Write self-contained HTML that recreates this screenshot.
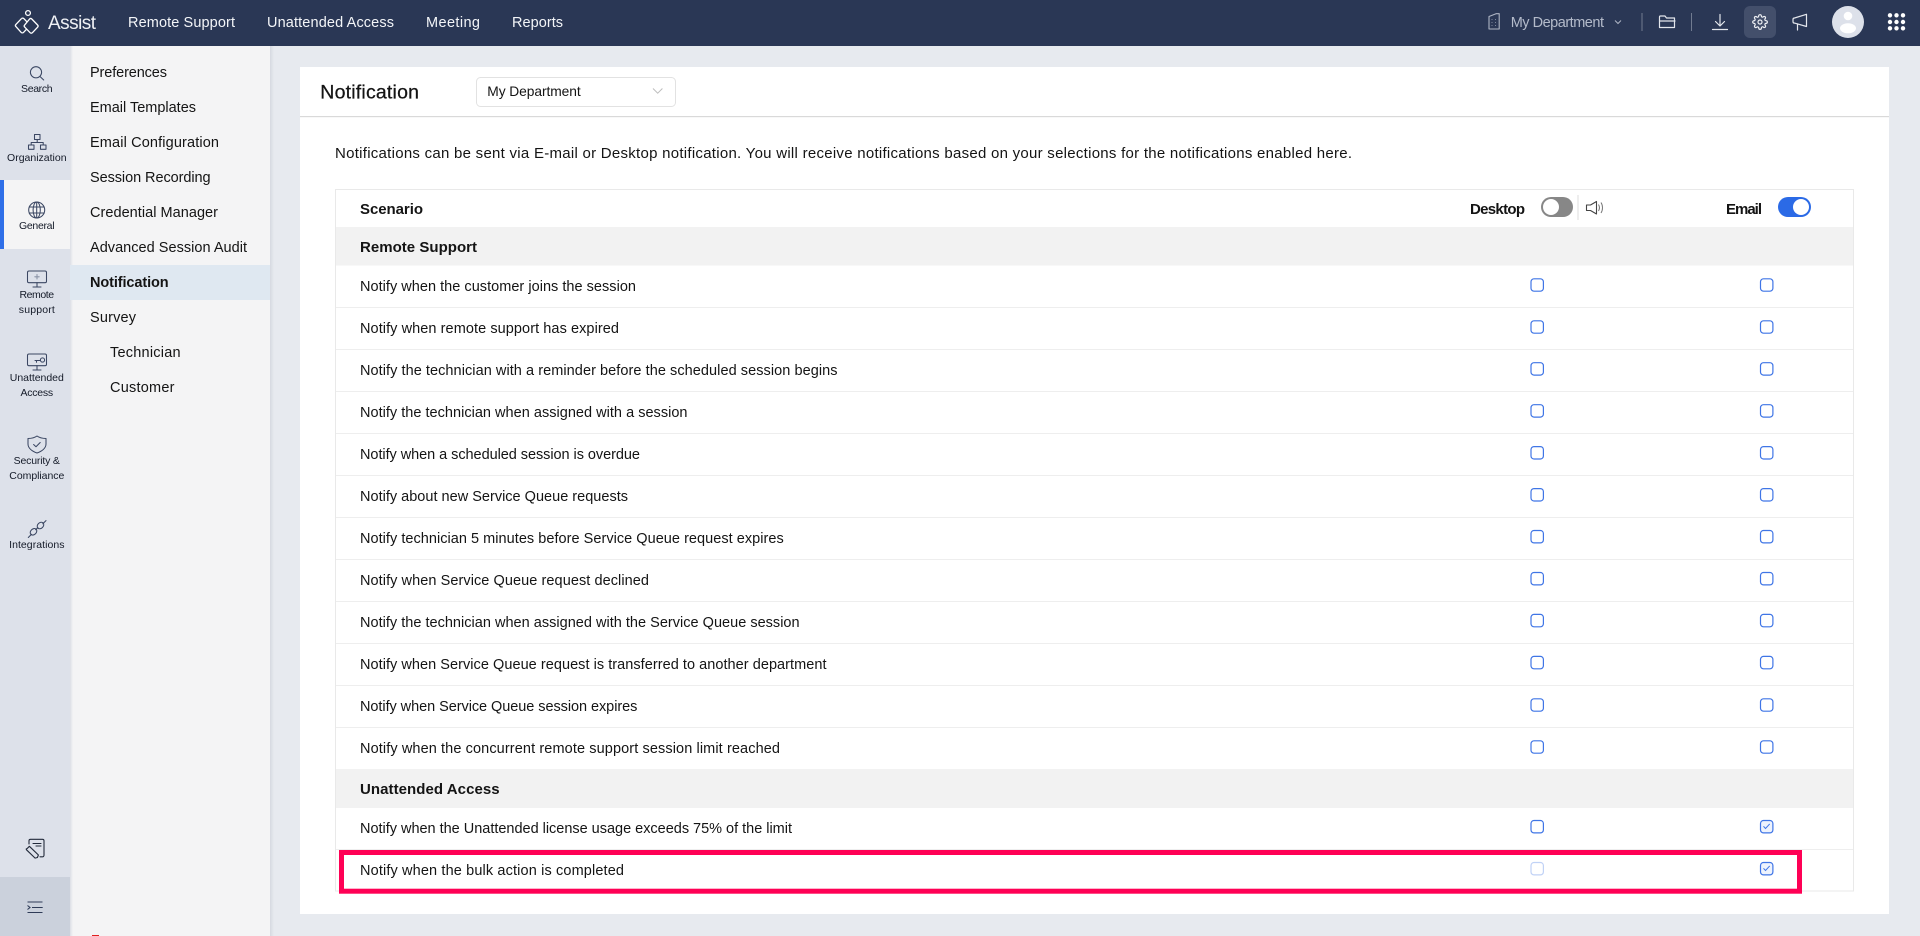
<!DOCTYPE html>
<html lang="en"><head><meta charset="utf-8"><title>Notification</title>
<style>
html,body{margin:0;padding:0;width:1920px;height:936px;overflow:hidden;background:#e7eaef}
svg{display:block;filter:blur(.3px)}
text{font-family:"Liberation Sans",sans-serif;fill:#141414;font-size:14.5px}
.b{font-weight:700;font-size:15px}
.n{fill:#f3f5f8;font-size:14.5px}
.r{font-size:10.5px;text-anchor:middle;fill:#141a28}
.ic{fill:none;stroke:#3b4763;stroke-width:1.05;stroke-linecap:round;stroke-linejoin:round}
.w{fill:none;stroke:#e3e6ec;stroke-width:1.2;stroke-linecap:round;stroke-linejoin:round}
</style></head><body>
<svg width="1920" height="936" viewBox="0 0 1920 936" xmlns="http://www.w3.org/2000/svg">
<defs>
<linearGradient id="sh"><stop offset="0" stop-color="#d6d9e0"/><stop offset="1" stop-color="#e7eaef"/></linearGradient>
<linearGradient id="sh2"><stop offset="0" stop-color="#dcdfe6"/><stop offset="1" stop-color="#f4f4f5"/></linearGradient>
<g id="c"><rect x="-6" y="-6" width="12.4" height="12.4" rx="3" fill="#fff" stroke="#3f75e6" stroke-width="1.2"/></g>
<g id="k"><rect x="-6" y="-6" width="12.4" height="12.4" rx="3" fill="#eef3fd" stroke="#3f75e6" stroke-width="1.2"/><path d="M-3-.2-1 2 3.2-2.6" fill="none" stroke="#3f75e6" stroke-width="1"/></g>
</defs>
<rect width="1920" height="936" fill="#e7eaef"/>
<!-- rail -->
<rect x="0" y="46" width="70" height="890" fill="#dde1ea"/>
<rect x="0" y="877" width="70" height="59" fill="#cbd1dc"/>
<!-- submenu -->
<rect x="70" y="46" width="200" height="890" fill="#f4f4f5"/>
<rect x="270" y="46" width="4" height="890" fill="url(#sh)"/>
<rect x="70" y="46" width="3" height="890" fill="url(#sh2)"/>
<rect x="70" y="265" width="200" height="35" fill="#dfe8f1"/>
<rect x="0" y="180" width="70" height="69" fill="#f4f4f5"/>
<rect x="0" y="180" width="4" height="69" fill="#2f6fe8"/>
<rect x="92" y="935" width="7" height="1" fill="#e02020"/>
<!-- header -->
<rect width="1920" height="46" fill="#2a3755"/>
<g fill="none" stroke="#fff" stroke-width="1.3" stroke-linejoin="round">
<circle cx="28" cy="13" r="2.4"/>
<path d="M21.5 18.6 15.9 24.4a1.6 1.6 0 0 0 0 2.2l5.3 5.8a1.6 1.6 0 0 0 2.3 0l3.2-3.3"/>
<path d="M21.5 18.6a1.6 1.6 0 0 1 2.3 0l3.4 3.5"/>
<path d="M31.8 19 37.6 25a1.6 1.6 0 0 1 0 2.2l-5.2 5.5a1.6 1.6 0 0 1-2.3 0l-5.4-5.6a1.6 1.6 0 0 1 0-2.2L29.6 19a1.6 1.6 0 0 1 2.2 0z"/>
</g>
<text x="48" y="29" textLength="48" style="font-size:19px;fill:#eef0f4">Assist</text>
<text class="n" x="128" y="27" textLength="107">Remote Support</text>
<text class="n" x="267" y="27" textLength="127">Unattended Access</text>
<text class="n" x="426" y="27" textLength="54">Meeting</text>
<text class="n" x="512" y="27" textLength="51">Reports</text>
<!-- header right -->
<g fill="none" stroke="#aeb5c4" stroke-width="1.1" stroke-linejoin="round">
<path d="M1489 16.500l7-2.800h3.200v15.300h-10.200z"/>
<path d="M1492 19v.6M1492 22v.6M1492 25v.6M1495.500 19v.6M1495.500 22v.6M1495.500 25v.6" stroke-width="1"/>
</g>
<text x="1510.700" y="27" textLength="93.300" style="font-size:14.5px;fill:#b4bbca">My Department</text>
<path d="M1615 20.500l3 3 3-3" fill="none" stroke="#aeb5c4" stroke-width="1"/>
<rect x="1641.500" y="13" width="1" height="18" fill="#717b90"/>
<rect x="1691" y="13" width="1" height="18" fill="#717b90"/>
<g class="w">
<path d="M1659.500 27.500V17a1 1 0 0 1 1-1h4.500l1.500 2h8v9.500z"/>
<path d="M1659.500 21h15.500"/>
<path d="M1720 14.500v11M1715.500 21.500l4.500 4.500 4.500-4.500"/><path d="M1712.500 29.500h15"/>
</g>
<rect x="1744" y="6" width="32" height="32" rx="6" fill="#434f6b"/>
<g transform="translate(1752 14) scale(.667)"><path fill="none" stroke="#eef0f4" stroke-width="1.800" stroke-linejoin="round" d="M19.4 15a1.65 1.65 0 0 0 .33 1.82l.06.06a2 2 0 0 1 0 2.83 2 2 0 0 1-2.83 0l-.06-.06a1.65 1.65 0 0 0-1.82-.33 1.65 1.65 0 0 0-1 1.51V21a2 2 0 0 1-2 2 2 2 0 0 1-2-2v-.09A1.65 1.65 0 0 0 9 19.4a1.65 1.65 0 0 0-1.82.33l-.06.06a2 2 0 0 1-2.83 0 2 2 0 0 1 0-2.83l.06-.06a1.65 1.65 0 0 0 .33-1.82 1.65 1.65 0 0 0-1.51-1H3a2 2 0 0 1-2-2 2 2 0 0 1 2-2h.09A1.65 1.65 0 0 0 4.600 9a1.65 1.65 0 0 0-.33-1.82l-.06-.06a2 2 0 0 1 0-2.83 2 2 0 0 1 2.83 0l.06.06a1.65 1.65 0 0 0 1.82.33H9a1.65 1.65 0 0 0 1-1.51V3a2 2 0 0 1 2-2 2 2 0 0 1 2 2v.09a1.65 1.65 0 0 0 1 1.51 1.65 1.65 0 0 0 1.82-.33l.06-.06a2 2 0 0 1 2.83 0 2 2 0 0 1 0 2.83l-.06.06a1.65 1.65 0 0 0-.33 1.82V9a1.65 1.65 0 0 0 1.51 1H21a2 2 0 0 1 2 2 2 2 0 0 1-2 2h-.09a1.65 1.65 0 0 0-1.51 1z"/><circle cx="12" cy="12" r="3" fill="none" stroke="#eef0f4" stroke-width="1.800"/></g>
<g class="w"><path d="M1793 19.500c0-1 .5-1.500 1.500-1.500l12-3.700v12.200l-12-3.400c-1 0-1.500-.6-1.500-1.500z"/><path d="M1797.500 24v6"/></g>
<circle cx="1848" cy="22" r="16" fill="#dde1ea"/>
<circle cx="1848" cy="16" r="4.300" fill="#fff"/>
<ellipse cx="1848" cy="28.300" rx="8" ry="5" fill="#fff"/>
<g fill="#fff"><circle cx="1890" cy="15.300" r="2.200"/><circle cx="1896.500" cy="15.300" r="2.200"/><circle cx="1903" cy="15.300" r="2.200"/><circle cx="1890" cy="22" r="2.200"/><circle cx="1896.500" cy="22" r="2.200"/><circle cx="1903" cy="22" r="2.200"/><circle cx="1890" cy="28.300" r="2.200"/><circle cx="1896.500" cy="28.300" r="2.200"/><circle cx="1903" cy="28.300" r="2.200"/></g>
<!-- rail icons -->
<g class="ic">
<circle cx="36" cy="72.300" r="5.600"/><path d="M40 76.500l3.700 3.500"/>
<path d="M34.500 134.500h5.500v5h-5.500zM28.500 145h5.500v4.300h-5.500zM40.500 145h5.500v4.300h-5.500zM37.200 139.500v3h-6v2.500M37.200 142.500h6v2.500"/>
<circle cx="36.700" cy="210" r="8"/><ellipse cx="36.700" cy="210" rx="3.600" ry="8"/><path d="M29.300 207h14.800M29.300 213h14.800M36.700 202v16"/>
<rect x="27.500" y="271" width="19" height="11.700" rx="1.500"/><path d="M37 282.700v4.300M33 287h8"/><path d="M37 274.500v4.500M34.800 276.800h4.400" stroke="#8a93a6"/>
<rect x="27.500" y="354" width="19" height="11.700" rx="1.500"/><path d="M37 365.700v4.300M33 370h8M35 360.500h5.500M36.500 360.500v1.800"/><circle cx="42.500" cy="360" r="2.100"/>
<path d="M37 436c2.500 1.800 5.500 2.500 9 2.500v5.500c0 4-4 7.200-9 9-5-1.800-9-5-9-9v-5.500c3.500 0 6.500-.7 9-2.500z"/><path d="M33.600 444.500l2.400 2.200 4.200-4.200"/>
<path d="M28.300 537.500l3.200-3.200M42.800 523.800l3.200-3.200M35.600 529.700l2.300-2.100"/><ellipse cx="33.500" cy="531.800" rx="2.800" ry="3.700" transform="rotate(45 33.500 531.800)"/><ellipse cx="40.500" cy="525.500" rx="2.800" ry="3.700" transform="rotate(45 40.500 525.500)"/>
</g>
<g fill="none" stroke="#222a3a" stroke-width="1.100" stroke-linecap="round" stroke-linejoin="round">
<path d="M29 844v-3.200a1.500 1.500 0 0 1 1.500-1.500h12a1.500 1.500 0 0 1 1.500 1.500v14.500a1.500 1.500 0 0 1-1.500 1.500h-2.500"/>
<path d="M33 843.500h8M36 846h5"/>
<path d="M27.200 848.500l2.200-2.200 9 8.700-1 2.500-2.300.6-8.600-8.300c-.3-.3-.3-.6-.3-.8z"/>
</g>
<path d="M27.500 902h15M32 907.500h10.700M27.500 912.500h15M27.500 905.500l2.500 2-2.500 2" fill="none" stroke="#2f3b57" stroke-width="1.100"/>
<!-- rail labels -->
<text class="r" x="36.800" y="92" textLength="31.500">Search</text>
<text class="r" x="36.800" y="161" textLength="59.500">Organization</text>
<text class="r" x="36.800" y="229" textLength="35.500">General</text>
<text class="r" x="36.800" y="298" textLength="34.700">Remote</text>
<text class="r" x="36.800" y="313" textLength="36">support</text>
<text class="r" x="36.800" y="381" textLength="54">Unattended</text>
<text class="r" x="36.800" y="396" textLength="32.600">Access</text>
<text class="r" x="36.800" y="464" textLength="46.300">Security &amp;</text>
<text class="r" x="36.800" y="479" textLength="55">Compliance</text>
<text class="r" x="36.800" y="548" textLength="55.400">Integrations</text>
<!-- submenu text -->
<text x="90" y="77" textLength="77">Preferences</text>
<text x="90" y="112" textLength="106">Email Templates</text>
<text x="90" y="147" textLength="129">Email Configuration</text>
<text x="90" y="182" textLength="120.600">Session Recording</text>
<text x="90" y="217" textLength="128">Credential Manager</text>
<text x="90" y="252" textLength="157">Advanced Session Audit</text>
<text class="b" x="90" y="287" textLength="78.600" style="font-size:14.500px">Notification</text>
<text x="90" y="322" textLength="46">Survey</text>
<text x="110" y="357" textLength="70.600">Technician</text>
<text x="110" y="392" textLength="64.500">Customer</text>
<!-- card -->
<rect x="300" y="67" width="1589" height="847" fill="#fff"/>
<rect x="300" y="116" width="1589" height="1.200" fill="#d9d9d9"/>
<text x="320.300" y="98.500" textLength="98.700" style="font-size:19.500px;stroke:#111;stroke-width:.25">Notification</text>
<rect x="476.500" y="77.500" width="199" height="29" rx="4" fill="#fff" stroke="#e2e2e2"/>
<text x="487.300" y="96" textLength="93.400" style="font-size:13.800px">My Department</text>
<path d="M653 88.500l4.700 4.700 4.700-4.700" fill="none" stroke="#bdbdbd" stroke-width="1"/>
<text x="335" y="158" textLength="1017" style="font-size:15px">Notifications can be sent via E-mail or Desktop notification. You will receive notifications based on your selections for the notifications enabled here.</text>
<!-- table -->
<rect x="335.500" y="189.500" width="1518" height="701.500" fill="#fff" stroke="#e9e9e9"/>
<rect x="336" y="227" width="1517" height="38.500" fill="#f2f2f2"/>
<rect x="336" y="769" width="1517" height="39" fill="#f2f2f2"/>
<g fill="#eeeeee">
<rect x="336" y="307" width="1517" height="1"/><rect x="336" y="349" width="1517" height="1"/><rect x="336" y="391" width="1517" height="1"/><rect x="336" y="433" width="1517" height="1"/><rect x="336" y="475" width="1517" height="1"/><rect x="336" y="517" width="1517" height="1"/><rect x="336" y="559" width="1517" height="1"/><rect x="336" y="601" width="1517" height="1"/><rect x="336" y="643" width="1517" height="1"/><rect x="336" y="685" width="1517" height="1"/><rect x="336" y="727" width="1517" height="1"/><rect x="336" y="849" width="1517" height="1"/>
</g>
<text class="b" x="360" y="214" textLength="63">Scenario</text>
<text class="b" x="1470" y="214" textLength="55">Desktop</text>
<rect x="1541" y="197" width="32" height="20" rx="10" fill="#878787"/><circle cx="1551" cy="207" r="8" fill="#fff"/>
<rect x="1577.500" y="195" width="1" height="25" fill="#dedede"/>
<path d="M1586.500 205h4l6-3.500v12.500l-6-3.500h-4z" fill="none" stroke="#444" stroke-width="1.100" stroke-linejoin="round"/>
<path d="M1598.500 204.500c1.200 2 1.200 4.500 0 6.500M1601 202.500c2 3 2 7.500 0 10.500" fill="none" stroke="#777" stroke-width="1"/>
<text class="b" x="1726" y="214" textLength="36">Email</text>
<rect x="1778" y="197" width="33" height="20" rx="10" fill="#2b6ae6"/><circle cx="1801" cy="207" r="8" fill="#fff"/>
<text class="b" x="360" y="252" textLength="117">Remote Support</text>
<text x="360" y="291" textLength="276">Notify when the customer joins the session</text>
<text x="360" y="333" textLength="259">Notify when remote support has expired</text>
<text x="360" y="375" textLength="477.500">Notify the technician with a reminder before the scheduled session begins</text>
<text x="360" y="417" textLength="327.500">Notify the technician when assigned with a session</text>
<text x="360" y="459" textLength="280">Notify when a scheduled session is overdue</text>
<text x="360" y="501" textLength="268">Notify about new Service Queue requests</text>
<text x="360" y="543" textLength="423.700">Notify technician 5 minutes before Service Queue request expires</text>
<text x="360" y="585" textLength="289">Notify when Service Queue request declined</text>
<text x="360" y="627" textLength="439.600">Notify the technician when assigned with the Service Queue session</text>
<text x="360" y="669" textLength="466.500">Notify when Service Queue request is transferred to another department</text>
<text x="360" y="711" textLength="277.400">Notify when Service Queue session expires</text>
<text x="360" y="753" textLength="420">Notify when the concurrent remote support session limit reached</text>
<text class="b" x="360" y="794" textLength="139.600">Unattended Access</text>
<text x="360" y="833" textLength="432">Notify when the Unattended license usage exceeds 75% of the limit</text>
<text x="360" y="875" textLength="264">Notify when the bulk action is completed</text>
<!-- checkboxes -->
<use href="#c" x="1537" y="284.800"/><use href="#c" x="1766.500" y="284.800"/>
<use href="#c" x="1537" y="326.800"/><use href="#c" x="1766.500" y="326.800"/>
<use href="#c" x="1537" y="368.700"/><use href="#c" x="1766.500" y="368.700"/>
<use href="#c" x="1537" y="410.700"/><use href="#c" x="1766.500" y="410.700"/>
<use href="#c" x="1537" y="452.600"/><use href="#c" x="1766.500" y="452.600"/>
<use href="#c" x="1537" y="494.600"/><use href="#c" x="1766.500" y="494.600"/>
<use href="#c" x="1537" y="536.500"/><use href="#c" x="1766.500" y="536.500"/>
<use href="#c" x="1537" y="578.500"/><use href="#c" x="1766.500" y="578.500"/>
<use href="#c" x="1537" y="620.400"/><use href="#c" x="1766.500" y="620.400"/>
<use href="#c" x="1537" y="662.400"/><use href="#c" x="1766.500" y="662.400"/>
<use href="#c" x="1537" y="704.800"/><use href="#c" x="1766.500" y="704.800"/>
<use href="#c" x="1537" y="746.800"/><use href="#c" x="1766.500" y="746.800"/>
<use href="#c" x="1537" y="826.500"/><use href="#k" x="1766.500" y="826.500"/>
<use href="#c" x="1537" y="868.500" opacity=".32"/><use href="#k" x="1766.500" y="868.500"/>
<!-- highlight -->
<rect x="341.500" y="852.500" width="1458" height="38.700" fill="none" stroke="#ff0055" stroke-width="5"/>
</svg>
</body></html>
